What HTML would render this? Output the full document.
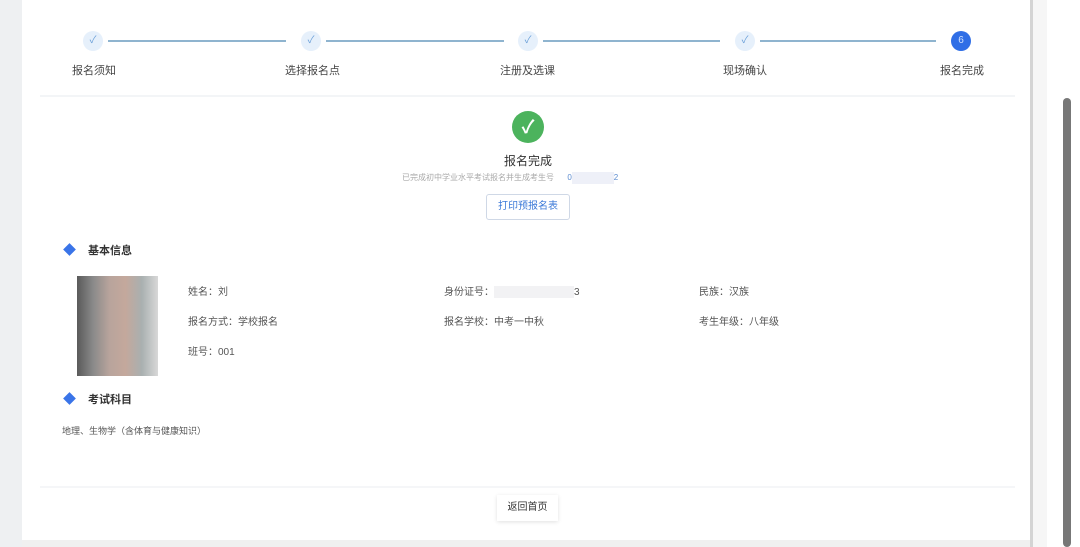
<!DOCTYPE html>
<html><head><meta charset="utf-8"><style>
body{margin:0;width:1080px;height:547px;overflow:hidden;background:#fff;font-family:"Liberation Sans","Noto Sans CJK SC",sans-serif;position:relative;color:#333}
.a{position:absolute}
.t{font-size:10px;color:#555;white-space:nowrap}
.c{width:20px;height:20px;border-radius:50%;background:#e6f0fb;color:#6a9fd8;font-size:10px;text-align:center;line-height:20px}
.ln{height:2px;background:#8fb4cf;top:40px}
.lb{font-size:11px;color:#444;top:62px;white-space:nowrap}
</style></head><body>
<div class="a" style="left:0;top:0;width:22px;height:547px;background:#eef0f2"></div>
<div class="a" style="left:1030px;top:0;width:3px;height:547px;background:#d4d4d4"></div>
<div class="a" style="left:1033px;top:0;width:14px;height:547px;background:#f6f6f6"></div>
<div class="a" style="left:1063px;top:98px;width:8px;height:449px;background:#777;border-radius:4px"></div>
<div class="a" style="left:22px;top:540px;width:1008px;height:7px;background:#f0f0f0"></div>

<div class="a c" style="left:83px;top:31px">✓</div>
<div class="a c" style="left:301px;top:31px">✓</div>
<div class="a c" style="left:518px;top:31px">✓</div>
<div class="a c" style="left:735px;top:31px">✓</div>
<div class="a c" style="left:951px;top:31px;background:#2f6ee6;color:#cfe0ff">6</div>
<div class="a ln" style="left:108px;width:178px"></div>
<div class="a ln" style="left:326px;width:178px"></div>
<div class="a ln" style="left:543px;width:177px"></div>
<div class="a ln" style="left:760px;width:176px"></div>
<div class="a lb" style="left:72px">报名须知</div>
<div class="a lb" style="left:285px">选择报名点</div>
<div class="a lb" style="left:500px">注册及选课</div>
<div class="a lb" style="left:723px">现场确认</div>
<div class="a lb" style="left:940px">报名完成</div>
<div class="a" style="left:40px;top:95px;width:975px;height:2px;background:#f3f5f7"></div>

<div class="a" style="left:512px;top:111px;width:32px;height:32px;border-radius:50%;background:#4cb35d;color:#fff;font-size:18px;text-align:center;line-height:32px;font-weight:bold">✓</div>
<div class="a" style="left:504px;top:152px;font-size:12px;color:#333">报名完成</div>
<div class="a" style="left:402px;top:172px;font-size:8px;color:#aaa;white-space:nowrap">已完成初中学业水平考试报名并生成考生号 &nbsp; &nbsp; &nbsp;<span style="color:#5b8bd0">0</span><span style="display:inline-block;width:42px;height:12px;background:#eef0f8;vertical-align:middle"></span><span style="color:#5b8bd0">2</span></div>
<div class="a" style="left:486px;top:194px;width:82px;height:24px;border:1px solid #cfd8e6;border-radius:3px;color:#3c7ad8;font-size:10px;text-align:center;line-height:24px">打印预报名表</div>

<div class="a" style="left:65px;top:245px;width:9px;height:9px;background:#3a74e8;transform:rotate(45deg)"></div>
<div class="a" style="left:88px;top:242px;font-size:11px;font-weight:bold;color:#333">基本信息</div>
<div class="a" style="left:77px;top:276px;width:81px;height:100px;background:linear-gradient(90deg,#5a5a5a 0,#8a8a8a 20%,#b8a49c 40%,#c4a89c 60%,#a9b0b0 80%,#d8d8d8 100%)"></div>
<div class="a t" style="left:188px;top:283px">姓名：刘</div>
<div class="a t" style="left:444px;top:283px">身份证号：<span style="display:inline-block;width:80px;height:12px;background:#f2f2f4;vertical-align:middle"></span>3</div>
<div class="a t" style="left:699px;top:283px">民族：汉族</div>
<div class="a t" style="left:188px;top:313px">报名方式：学校报名</div>
<div class="a t" style="left:444px;top:313px">报名学校：中考一中秋</div>
<div class="a t" style="left:699px;top:313px">考生年级：八年级</div>
<div class="a t" style="left:188px;top:343px">班号：001</div>

<div class="a" style="left:65px;top:394px;width:9px;height:9px;background:#3a74e8;transform:rotate(45deg)"></div>
<div class="a" style="left:88px;top:391px;font-size:11px;font-weight:bold;color:#333">考试科目</div>
<div class="a t" style="left:62px;top:424px;font-size:9px">地理、生物学（含体育与健康知识）</div>

<div class="a" style="left:40px;top:486px;width:975px;height:2px;background:#f5f6f8"></div>
<div class="a" style="left:497px;top:495px;width:61px;height:26px;box-shadow:0 1px 4px rgba(0,0,0,.12);font-size:10px;text-align:center;line-height:26px;color:#333">返回首页</div>
</body></html>
